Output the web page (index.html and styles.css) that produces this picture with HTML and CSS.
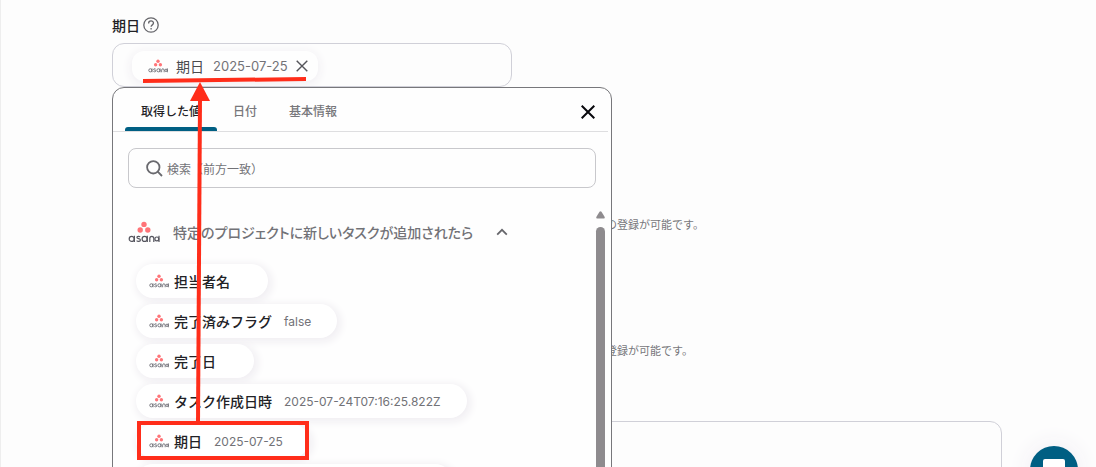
FILE: index.html
```html
<!DOCTYPE html>
<html lang="ja">
<head>
<meta charset="utf-8">
<title>期日</title>
<link rel="stylesheet" href="styles.css">
</head>
<body>
<svg class="defs" aria-hidden="true">
  <symbol id="asana" viewBox="0 0 32 22">
    <g fill="#ff7478"><circle cx="16" cy="3.4" r="2.7"/><circle cx="12.2" cy="9" r="2.7"/><circle cx="19.8" cy="9" r="2.7"/></g>
    <g fill="none" stroke="#56565f" stroke-width="1.2">
      <circle cx="3.7" cy="17.9" r="2.5"/><path d="M6.400 14.800v6.200"/>
      <path d="M12.200 15.900c-1-.8-3.300-.8-3.300.5 0 1.700 3.500.7 3.500 2.500 0 1.800-2.700 1.800-3.800.7"/>
      <circle cx="16.6" cy="17.9" r="2.5"/><path d="M19.300 14.800v6.200"/>
      <path d="M21.800 21v-3.400c0-3 4-3 4 0V21"/>
      <circle cx="28.8" cy="17.900" r="1.900"/><path d="M31 14.800v6.200"/>
    </g>
  </symbol>
</svg>
<main class="form">
  <div class="label-row">
    <span class="label">期日</span>
    <svg class="help" viewBox="0 0 16 16" fill="none" stroke="#66666b" stroke-width="1.3"><circle cx="8" cy="8" r="7.200"/><path d="M5.600 6.400c0-3.400 4.900-3.300 4.900-.3 0 1.900-2.400 1.700-2.400 3.700M8.100 10.900v1.600"/></svg>
  </div>
  <div class="picker">
    <div class="field">
      <div class="value">
        <svg class="logo"><use href="#asana"/></svg>
        <span class="value-name">期日</span>
        <span class="sample">2025-07-25</span>
        <button class="remove" aria-label="削除"><svg viewBox="0 0 12 12" stroke="#55555a" stroke-width="1.4"><path d="M.7.7l10.600 10.600M11.300.7L.7 11.300"/></svg></button>
      </div>
    </div>
    <section class="panel">
      <div class="tabs">
        <button class="tab active">取得した値</button>
        <button class="tab">日付</button>
        <button class="tab">基本情報</button>
        <button class="close" aria-label="閉じる"><svg viewBox="0 0 14 14" stroke="#08080c" stroke-width="2"><path d="M.7.7l12.600 12.600M13.300.7L.7 13.300"/></svg></button>
      </div>
      <label class="search">
        <svg viewBox="0 0 17 17" fill="none" stroke="#69696e" stroke-width="1.8"><circle cx="7.3" cy="7.3" r="6.2"/><path d="M11.700 11.700l4.300 4.300"/></svg>
        <input type="text" placeholder="検索（前方一致）" aria-label="検索">
      </label>
      <div class="scroller">
        <div class="results">
          <button class="group">
            <svg class="logo-large"><use href="#asana"/></svg>
            <span class="group-name">特定のプロジェクトに新しいタスクが追加されたら</span>
            <svg class="chevron" viewBox="0 0 12 8" fill="none" stroke="#66666b" stroke-width="1.8"><path d="M1.200 6.600L6 1.800l4.800 4.800"/></svg>
          </button>
          <div class="chips">
            <button class="chip"><svg class="logo"><use href="#asana"/></svg><span>担当者名</span></button>
            <button class="chip"><svg class="logo"><use href="#asana"/></svg><span>完了済みフラグ</span><span class="sample">false</span></button>
            <button class="chip"><svg class="logo"><use href="#asana"/></svg><span>完了日</span></button>
            <button class="chip"><svg class="logo"><use href="#asana"/></svg><span>タスク作成日時</span><span class="sample">2025-07-24T07:16:25.822Z</span></button>
            <button class="chip"><svg class="logo"><use href="#asana"/></svg><span>期日</span><span class="sample">2025-07-25</span></button>
            <div class="chip next"></div>
          </div>
        </div>
        <div class="track">
          <svg viewBox="0 0 9 8"><path d="M3.500.8Q4.500-.3 5.500.8L8.700 6Q9 7.500 8 7.500H1Q0 7.500.3 6z" fill="#8e8b8e"/></svg>
          <div class="thumb"></div>
        </div>
      </div>
    </section>
  </div>
  <p class="hint">の登録が可能です。</p>
  <p class="hint second">登録が可能です。</p>
  <textarea class="memo" aria-label="内容"></textarea>
</main>
<button class="chat" aria-label="チャット"><svg viewBox="0 0 22 22"><path d="M2 0h18q2 0 2 2v16l-5-2H2q-2 0-2-2V2q0-2 2-2z" fill="#fff"/></svg></button>
<svg class="marks" viewBox="0 0 500 467" fill="none" stroke="#ff2d1a">
  <path d="M143 81L306 79" stroke-width="4"/>
  <path d="M200 98L198 423" stroke-width="4"/>
  <path d="M200 82l10 19h-20z" fill="#ff2d1a" stroke="none"/>
  <rect x="139" y="423" width="168" height="35" stroke-width="4"/>
</svg>
</body>
</html>
```
FILE: styles.css
```css
* { box-sizing: border-box; }
body {
  position: relative;
  margin: 0;
  height: 100vh;
  overflow: hidden;
  border-left: 1px solid #eeeeee;
  background: #fdfdfd;
  color: #222226;
  font-family: "Noto Sans CJK JP", sans-serif;
  font-size: 14px;
}
button { border: 0; padding: 0; background: none; font: inherit; color: inherit; }
svg { display: block; flex: none; }
.defs { position: absolute; width: 0; height: 0; }
.form { padding: 14px 94px 0 111px; }
.label-row { display: flex; align-items: center; gap: 3px; height: 21px; }
.label { font-weight: 500; }
.help { width: 16px; height: 16px; }
.picker { position: relative; max-width: 500px; margin-top: 8px; }
.field {
  display: flex;
  max-width: 400px;
  height: 44px;
  padding: 7px 19px 0;
  border: 1px solid #d0d0d8;
  border-radius: 12px;
  overflow: hidden;
}
.value {
  display: flex;
  align-items: center;
  height: 30px;
  padding: 0 10px 0 16px;
  border-radius: 12px;
  background: #fefefe;
  box-shadow: 0 2px 10px 2px #f2f0f4;
}
.logo { width: 20px; height: 14px; }
.value-name { margin: 0 9px 0 8px; color: #4a4a4e; }
.sample { font-family: Inter, sans-serif; font-size: 12px; font-weight: 400; color: #727277; }
.value .sample { font-size: 13px; }
.remove { margin-left: 8px; }
.remove svg { width: 12px; height: 12px; }
.panel {
  position: absolute;
  top: 44px;
  left: 0;
  width: 100%;
  border: 1px solid #77777b;
  border-radius: 12px;
  background: #fefefe;
}
.tabs {
  display: flex;
  height: 44px;
  margin-right: 3px;
  padding: 0 13px 0 12px;
  border-bottom: 1px solid #dedee0;
  font-size: 12px;
  font-weight: 500;
}
.tab { position: relative; padding: 2px 16px 0; color: #77777b; }
.tab.active { color: #222226; }
.tab.active::after {
  content: "";
  position: absolute;
  inset: auto 0 0;
  height: 4px;
  border-radius: 3px 3px 0 0;
  background: #005f83;
}
.close { margin-left: auto; padding-top: 5px; }
.close svg { width: 14px; height: 14px; }
.search {
  display: flex;
  align-items: center;
  gap: 4px;
  height: 40px;
  margin: 16px 15px 0;
  padding: 0 17px;
  border: 1px solid #c8c8cc;
  border-radius: 8px;
}
.search svg { width: 17px; height: 17px; }
.search input { flex: 1; min-width: 0; border: 0; padding: 0; background: none; font: inherit; font-size: 12px; outline: 0; }
.search input::placeholder { color: #727277; }
.scroller { display: flex; margin-top: 16px; padding: 0 6px 0 15px; }
.results { flex: 1; }
.group { display: flex; align-items: center; height: 56px; }
.logo-large { width: 32px; height: 22px; }
.group-name { margin: 0 23px 0 13px; font-weight: 500; color: #727277; font-feature-settings: "palt"; }
.chevron { width: 12px; height: 8px; }
.chips { display: flex; flex-direction: column; align-items: flex-start; gap: 6px; padding: 4px 8px 40px; }
.chip {
  display: flex;
  align-items: center;
  gap: 5px;
  height: 34px;
  padding: 0 38px 0 13px;
  border-radius: 17px;
  background: #ffffff;
  box-shadow: 2px 2px 9px 2px #f0eef2;
  font-weight: 500;
}
.chip .sample { margin-left: 7px; }
.chip:has(.sample) { padding-right: 26px; }
.chip.next { width: 70%; }
.track { display: flex; flex-direction: column; gap: 8px; width: 9px; padding-top: 7px; }
.track svg { width: 9px; height: 8px; }
.thumb { flex: 1; border-radius: 5px; background: #8e8b8e; }
.hint { margin: 129px 0 0; padding-left: 494px; font-size: 11px; line-height: 16px; color: #77777b; }
.hint.second { margin-top: 110px; }
.memo {
  display: block;
  width: 100%;
  height: 120px;
  margin-top: 63px;
  border: 1px solid #d0d0d8;
  border-radius: 12px;
  background: none;
  resize: none;
}
.chat {
  position: absolute;
  right: 18px;
  bottom: -27px;
  width: 48px;
  height: 48px;
  padding: 12px 13px;
  border-radius: 50%;
  background: #005f83;
  box-shadow: 0 0 20px 6px #f5f3f7;
}
.marks { position: absolute; top: 0; left: -1px; width: 500px; height: 467px; pointer-events: none; }
```
